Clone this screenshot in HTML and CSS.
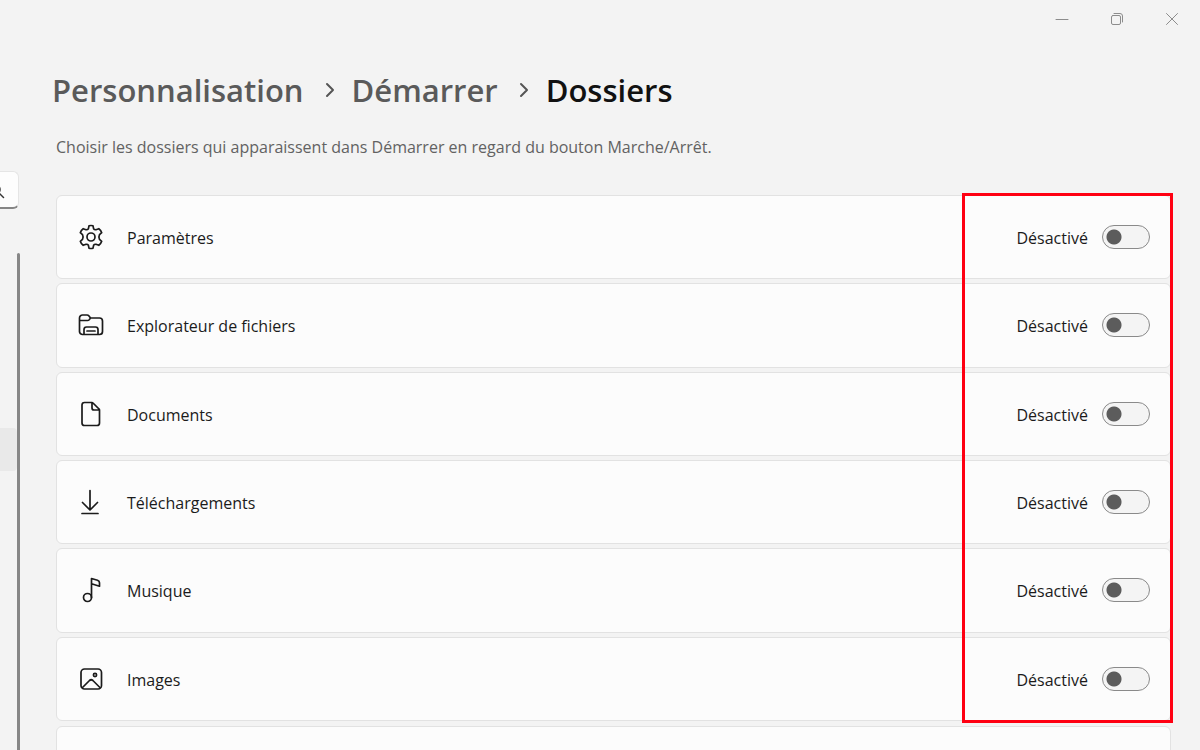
FILE: index.html
```html
<!DOCTYPE html>
<html lang="fr">
<head>
<meta charset="utf-8">
<title>Dossiers</title>
<link rel="stylesheet" href="styles.css">
</head>
<body>
<div class="window">
  <header class="titlebar">
    <button class="winbtn" type="button" aria-label="Réduire"><svg width="14" height="14" viewBox="0 0 14 14"><path d="M1 7.5h12"/></svg></button>
    <button class="winbtn" type="button" aria-label="Restaurer"><svg width="14" height="14" viewBox="0 0 14 14"><rect x="1.5" y="3.5" width="9" height="9" rx="1.5"/><path d="M4 1.5h6a2.500 2.500 0 0 1 2.500 2.500v6"/></svg></button>
    <button class="winbtn" type="button" aria-label="Fermer"><svg width="14" height="14" viewBox="0 0 14 14"><path d="M1.500 1.500l11 11M12.500 1.500l-11 11"/></svg></button>
  </header>
  <div class="body">
    <aside class="sidebar">
      <div class="search">
        <input class="search-input" type="text" aria-label="Rechercher">
        <svg class="search-icon" width="16" height="16" viewBox="0 0 16 16"><circle cx="6.500" cy="6.500" r="4.500"/><path d="M10 10l4.500 4.500"/></svg>
      </div>
      <div class="nav">
        <div class="nav-current"></div>
        <div class="scrollbar"></div>
      </div>
    </aside>
    <main class="content">
      <nav class="crumbs">
        <a class="crumb" href="#">Personnalisation</a>
        <svg class="chevron" width="10" height="16" viewBox="0 0 10 16"><path d="M2 2l6 6-6 6"/></svg>
        <a class="crumb" href="#">Démarrer</a>
        <svg class="chevron" width="10" height="16" viewBox="0 0 10 16"><path d="M2 2l6 6-6 6"/></svg>
        <h1 class="crumb current">Dossiers</h1>
      </nav>
      <p class="intro">Choisir les dossiers qui apparaissent dans Démarrer en regard du bouton Marche/Arrêt.</p>
      <div class="list">
        <div class="group">
          <label class="card">
            <svg class="icon" width="26" height="26" viewBox="0 0 26 26"><path d="M10.400 4.700L11 1.800Q13 1.200 15 1.800L15.600 4.700Q16.400 6 18 5.700L20.800 4.700Q23 6.300 23.700 8.700L21.500 10.700Q20.300 13 21.500 15.300L23.700 17.300Q23 19.700 20.800 21.300L18 20.300Q16.400 20 15.600 21.300L15 24.200Q13 24.800 11 24.200L10.400 21.300Q9.600 20 8 20.300L5.200 21.300Q3 19.700 2.300 17.300L4.500 15.300Q5.700 13 4.500 10.700L2.300 8.700Q3 6.300 5.200 4.700L8 5.700Q9.600 6 10.400 4.700Z"/><circle cx="13" cy="13" r="4"/></svg>
            <span class="name">Paramètres</span><span class="state">Désactivé</span><input class="toggle" type="checkbox" role="switch">
          </label>
          <label class="card">
            <svg class="icon" width="26" height="26" viewBox="0 0 26 26"><path d="M6 22.500H4.500a3 3 0 0 1-3-3V6a3 3 0 0 1 3-3H9q1.200 0 2 1l1.500 2H21.500a3 3 0 0 1 3 3v10.500a3 3 0 0 1-3 3H6V17.500a2.500 2.500 0 0 1 2.500-2.500h9a2.500 2.500 0 0 1 2.500 2.500v5M1.500 8.500H9.500q1 0 1.700-.8L12.500 6M9 19h8"/></svg>
            <span class="name">Explorateur de fichiers</span><span class="state">Désactivé</span><input class="toggle" type="checkbox" role="switch">
          </label>
          <label class="card">
            <svg class="icon" width="26" height="26" viewBox="0 0 26 26"><path d="M14 1.500H6.500a2.500 2.500 0 0 0-2.500 2.500v18a2.500 2.500 0 0 0 2.500 2.500h12.500a2.500 2.500 0 0 0 2.500-2.500V9q0-.6-.5-1L15 2q-.4-.5-1-.5V7q0 2 2 2h5.500"/></svg>
            <span class="name">Documents</span><span class="state">Désactivé</span><input class="toggle" type="checkbox" role="switch">
          </label>
          <label class="card">
            <svg class="icon" width="26" height="26" viewBox="0 0 26 26"><path d="M12 1.500v19M4.500 13.500l7.500 7.500 7.500-7.500M4 24.500h16"/></svg>
            <span class="name">Téléchargements</span><span class="state">Désactivé</span><input class="toggle" type="checkbox" role="switch">
          </label>
          <label class="card">
            <svg class="icon" width="26" height="26" viewBox="0 0 26 26"><circle cx="9.500" cy="20.500" r="4"/><path d="M13.500 20.500V1.500l6 1.700q2 .8 2 2.500v3.500l-8-2.500"/></svg>
            <span class="name">Musique</span><span class="state">Désactivé</span><input class="toggle" type="checkbox" role="switch">
          </label>
          <label class="card">
            <svg class="icon" width="26" height="26" viewBox="0 0 26 26"><rect x="3" y="3" width="20.500" height="20" rx="3.500"/><path d="M4.500 21.500l7-7q1.700-1.500 3.400 0l7 7"/><circle cx="17" cy="9" r="1.600"/></svg>
            <span class="name">Images</span><span class="state">Désactivé</span><input class="toggle" type="checkbox" role="switch">
          </label>
          <div class="highlight"></div>
        </div>
        <div class="card"></div>
      </div>
    </main>
  </div>
</div>
</body>
</html>
```
FILE: styles.css
```css
* { box-sizing: border-box; }
body {
  margin: 0;
  background: #f3f3f3;
  color: #1b1b1b;
  font-family: "Open Sans", "Noto Sans", sans-serif;
  font-size: 16px;
}
svg { fill: none; stroke-linecap: round; stroke-linejoin: round; flex: none; }
.window { display: flex; flex-direction: column; height: 100vh; overflow: hidden; }
.titlebar { display: flex; justify-content: flex-end; flex: none; height: 38px; padding-right: 1px; }
.winbtn {
  display: flex;
  align-items: center;
  justify-content: center;
  width: 55px;
  padding: 0;
  border: 0;
  background: none;
}
.winbtn svg { stroke: #8c8c8c; }
.body { display: flex; flex: 1; min-height: 0; }
.sidebar {
  display: flex;
  flex-direction: column;
  align-items: flex-end;
  flex: none;
  width: 20px;
  padding-top: 133px;
  overflow: hidden;
}
.search { position: relative; width: 280px; margin-right: 1px; flex: none; }
.search-input {
  display: block;
  width: 100%;
  height: 38px;
  border: 1px solid #e5e5e5;
  border-bottom: 2px solid #868686;
  border-radius: 6px;
  background: #fdfdfd;
}
.search-icon { position: absolute; right: 14px; top: 12px; stroke: #333; stroke-width: 1.500; }
.nav { display: flex; align-items: flex-start; justify-content: flex-end; flex: 1; width: 280px; margin-top: 44px; }
.nav-current { flex: 1; height: 43px; margin-top: 175px; background: #e9e9e9; border-radius: 4px; }
.scrollbar { width: 3px; align-self: stretch; background: #868686; border-radius: 2px 2px 0 0; }
.content { flex: 1; min-width: 0; padding: 28px 29px 0 36px; }
.crumbs { display: flex; align-items: center; gap: 17px; height: 48px; margin-left: -4px; }
.crumb { margin: 0; color: #5a5a5a; font-size: 31px; font-weight: 600; line-height: 48px; text-decoration: none; white-space: nowrap; }
.current { color: #111; }
.chevron { margin-left: 4px; stroke: #555; stroke-width: 2; }
.intro { margin: 21px 0 36px; color: #626262; line-height: 24px; }
.list { display: flex; flex-direction: column; gap: 5px; }
.group { position: relative; display: grid; grid-auto-rows: 1fr; gap: 4px; min-height: 526px; }
.card {
  display: flex;
  align-items: center;
  flex: none;
  min-height: 84px;
  padding: 0 20px 0 21px;
  border: 1px solid #e2e2e2;
  border-radius: 6px;
  background: #fcfcfc;
}
.icon { stroke: #1b1b1b; stroke-width: 1.700; }
.name, .state { padding-top: 2px; }
.name { flex: 1; margin-left: 23px; }
.state { margin-right: 14px; }
.toggle {
  appearance: none;
  width: 48px;
  height: 24px;
  margin: 0;
  border: 1px solid #8a8a8a;
  border-radius: 12px;
  background: radial-gradient(circle at 11px 11px, #5c5c5c 7px, transparent 8px) #f4f4f4;
}
.highlight {
  position: absolute;
  top: -2px;
  right: -2px;
  bottom: -2px;
  width: 211px;
  border: 3px solid #ff0012;
  pointer-events: none;
}
```
